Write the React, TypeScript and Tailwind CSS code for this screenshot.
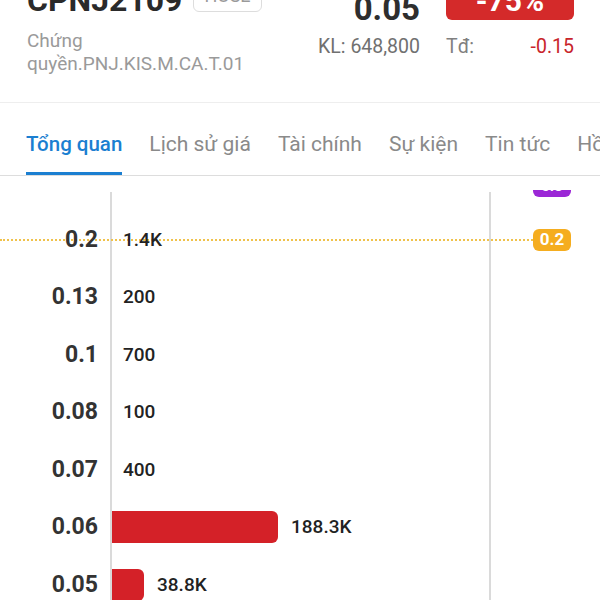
export default function App() {
  const rows = [
    { price: "0.2", vol: "1.4K", bar: 0 },
    { price: "0.13", vol: "200", bar: 0 },
    { price: "0.1", vol: "700", bar: 0 },
    { price: "0.08", vol: "100", bar: 0 },
    { price: "0.07", vol: "400", bar: 0 },
    { price: "0.06", vol: "188.3K", bar: 166 },
    { price: "0.05", vol: "38.8K", bar: 32 },
  ];
  const tabs = ["Tổng quan", "Lịch sử giá", "Tài chính", "Sự kiện", "Tin tức", "Hồ sơ"];

  return (
    <div className="w-[600px] h-[600px] overflow-hidden bg-white font-['Roboto',sans-serif]">
      {/* header */}
      <div className="mt-[-20px] h-[123px] border-b border-[#eeeeee] flex justify-between items-start px-[26px]">
        <div className="pl-[1px]">
          <div className="h-[36px] flex items-end">
            <span className="text-[32px] leading-none font-bold text-[#2a2a2a]">CPNJ2109</span>
            <span className="ml-[11px] mb-[4px] border border-[#dddddd] rounded-md px-[10px] text-[18px] leading-[30px] text-[#9a9a9a]">
              HOSE
            </span>
          </div>
          <div className="mt-[13px] w-[240px] text-[19px] leading-[23px] text-[#9a9a9a]">
            Chứng quyền.PNJ.KIS.M.CA.T.01
          </div>
        </div>
        <div className="grid grid-cols-[auto_128px] content-start gap-x-[26px]">
          <div className="h-[40px] flex items-end justify-end">
            <span className="text-[33px] leading-none font-bold text-[#2e2e2e] mb-[-5px]">0.05</span>
          </div>
          <div className="h-[40px] rounded-md bg-[#d42a2a] flex items-center justify-center text-white text-[30px] font-bold">
            -75%
          </div>
          <div className="mt-[15px] text-[19.5px] leading-[24px] text-[#707070] text-right">KL: 648,800</div>
          <div className="mt-[15px] text-[19.5px] leading-[24px] flex justify-between">
            <span className="text-[#808080]">Tđ:</span>
            <span className="text-[#c8242b]">-0.15</span>
          </div>
        </div>
      </div>

      {/* tabs */}
      <div className="h-[73px] border-b border-[#dddddd] flex gap-[27px] pl-[26px] whitespace-nowrap overflow-hidden">
        {tabs.map((t, i) => (
          <div
            key={t}
            className={
              i === 0
                ? "shrink-0 pt-[29px] pb-[16px] border-b-[3px] border-[#1b7fd1] text-[20.5px] leading-[24px] font-medium text-[#1b7fd1]"
                : "shrink-0 pt-[29px] pb-[16px] border-b-[3px] border-transparent text-[21px] leading-[24px] text-[#8a8a8a]"
            }
          >
            {t}
          </div>
        ))}
      </div>

      <div className="h-[14px]" />

      {/* chart */}
      <div className="relative h-[410px] overflow-hidden">
        <div className="absolute left-0 top-[49px] w-[533px] border-t-2 border-dotted border-[#f0c24b]" />
        <div className="flex h-full">
          <div className="w-[110px] pt-[21px] flex flex-col">
            {rows.map((r) => (
              <div key={r.price} className="relative shrink-0 h-[57.5px] flex items-center justify-end pr-[12px] text-[23px] font-bold text-[#333333]">
                {r.price}
              </div>
            ))}
          </div>
          <div className="w-[381px] mt-[2px] pt-[19px] border-x-2 border-[#dadada] flex flex-col">
            {rows.map((r) => (
              <div key={r.price} className="relative shrink-0 h-[57.5px] flex items-center text-[19px] font-medium text-[#222222]">
                {r.bar > 0 ? (
                  <>
                    <div className="h-[32px] bg-[#d42128] rounded-r-md" style={{ width: r.bar }} />
                    <span className="ml-[13px]">{r.vol}</span>
                  </>
                ) : (
                  <span className="ml-[11px]">{r.vol}</span>
                )}
              </div>
            ))}
          </div>
          <div className="flex-1 pl-[42px] flex flex-col">
            <div className="mt-[-15px] h-[22px] w-[38px] rounded-md bg-[#9b27d6] flex items-center justify-center text-white text-[15px] font-bold">
              0.3
            </div>
            <div className="relative mt-[32px] h-[22px] w-[38px] rounded-md bg-[#f5ad1f] flex items-center justify-center text-white text-[17px] font-bold">
              0.2
            </div>
          </div>
        </div>
      </div>
    </div>
  );
}
